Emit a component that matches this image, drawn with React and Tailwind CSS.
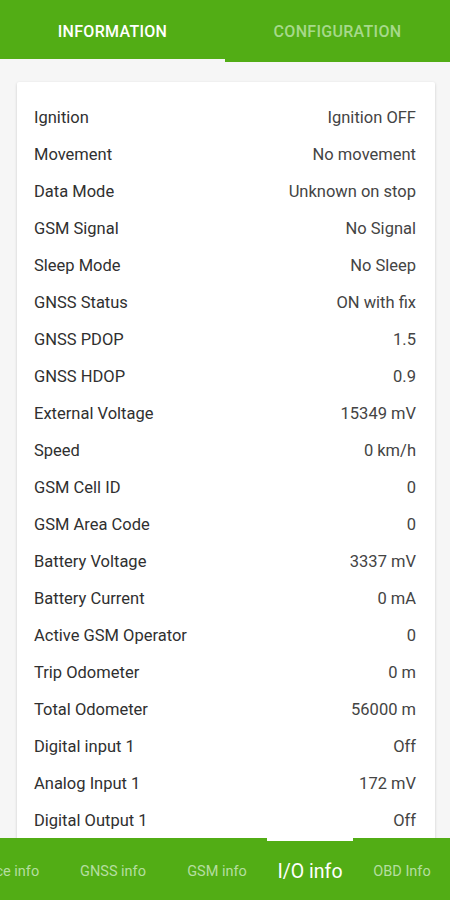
import React from "react";

const rows = [
  ["Ignition", "Ignition OFF"],
  ["Movement", "No movement"],
  ["Data Mode", "Unknown on stop"],
  ["GSM Signal", "No Signal"],
  ["Sleep Mode", "No Sleep"],
  ["GNSS Status", "ON with fix"],
  ["GNSS PDOP", "1.5"],
  ["GNSS HDOP", "0.9"],
  ["External Voltage", "15349 mV"],
  ["Speed", "0 km/h"],
  ["GSM Cell ID", "0"],
  ["GSM Area Code", "0"],
  ["Battery Voltage", "3337 mV"],
  ["Battery Current", "0 mA"],
  ["Active GSM Operator", "0"],
  ["Trip Odometer", "0 m"],
  ["Total Odometer", "56000 m"],
  ["Digital input 1", "Off"],
  ["Analog Input 1", "172 mV"],
  ["Digital Output 1", "Off"],
];

export default function App() {
  return (
    <div className="flex h-[900px] w-[450px] flex-col overflow-hidden bg-[#f6f6f6]" style={{ fontFamily: "Roboto, 'Noto Sans', sans-serif" }}>
      <div className="flex h-[62px] shrink-0 bg-[#52ad15]">
        <div className="relative flex w-[225px] items-center justify-center pt-[1px] text-[16px] font-medium tracking-[0.3px] text-white">
          INFORMATION
          <div className="absolute bottom-0 left-0 h-[3px] w-full bg-[#f6f6f6]" />
        </div>
        <div className="flex w-[225px] items-center justify-center pt-[1px] text-[16px] font-medium tracking-[0.3px] text-[#a6d98a]">
          CONFIGURATION
        </div>
      </div>
      <div className="min-h-0 flex-1 overflow-hidden pt-[20px]">
        <div className="ml-[17px] mr-[15px] rounded-[2px] bg-white pt-[18px] pb-[40px] pl-[17px] pr-[19px] shadow-[0_1px_3px_rgba(0,0,0,0.18)]">
          {rows.map(([k, v]) => (
            <div key={k} className="flex h-[37px] items-center justify-between text-[16.5px] text-[#303030]">
              <span>{k}</span>
              <span className="text-[#444444]">{v}</span>
            </div>
          ))}
        </div>
      </div>
      <div className="relative flex h-[62px] shrink-0 items-center overflow-hidden bg-[#52ad15] pt-[5px]">
        <div className="ml-[-52px] flex shrink-0 items-center whitespace-nowrap">
          <div className="flex w-[111px] shrink-0 justify-center text-[14.5px] text-[#b5dea0]"><span>Device info</span></div>
          <div className="flex w-[108px] shrink-0 justify-center text-[14.5px] text-[#b5dea0]"><span>GNSS info</span></div>
          <div className="flex w-[100px] shrink-0 justify-center text-[14.5px] text-[#b5dea0]"><span>GSM info</span></div>
          <div className="flex w-[86px] shrink-0 justify-center text-[19.5px] text-white"><span>I/O info</span></div>
          <div className="flex w-[98px] shrink-0 justify-center text-[14.5px] text-[#b5dea0]"><span>OBD Info</span></div>
        </div>
        <div className="absolute top-0 left-[267px] h-[3px] w-[86px] bg-white" />
      </div>
    </div>
  );
}
